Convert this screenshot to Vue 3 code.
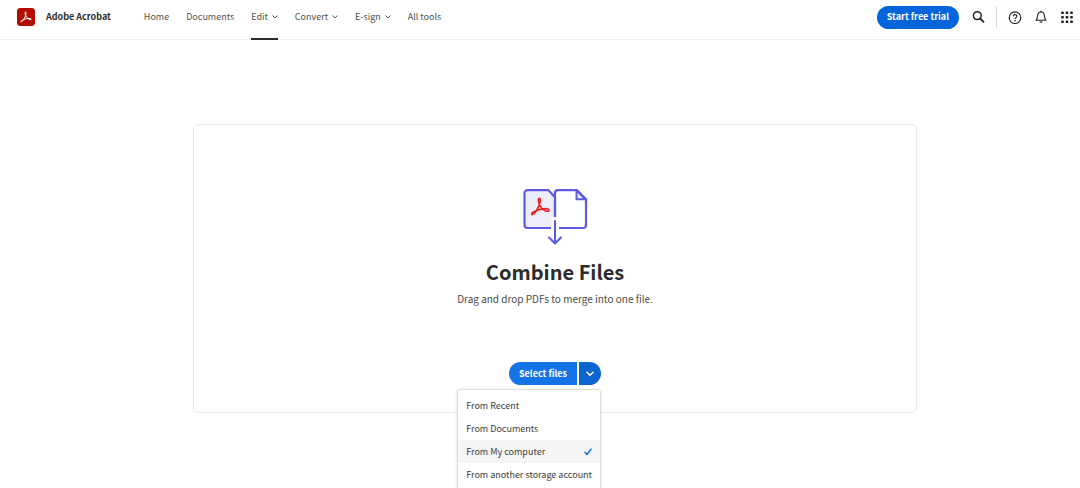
<script setup>
import { ref } from 'vue'

const links = [
  { label: 'Home' },
  { label: 'Documents' },
  { label: 'Edit', menu: true, active: true },
  { label: 'Convert', menu: true },
  { label: 'E-sign', menu: true },
  { label: 'All tools' }
]
const sources = ['From Recent', 'From Documents', 'From My computer', 'From another storage account']
const selected = ref('From My computer')
const open = ref(true)
</script>

<template>
  <div class="page">
    <header class="bar">
      <a class="brand" href="#">
        <svg class="logo" viewBox="0 0 18 18" aria-hidden="true">
          <rect width="18" height="18" rx="3.4" fill="#b30b00" />
          <path d="M8.6 3.9c-1 .1-.5 2.5.3 4 .9 1.8 2.600 3.600 4.700 3.800 1.200.1 1-1.200-.6-1.300-2.500-.2-6 .8-8.200 2-1.500.9-.9 2 .2 1.100C6.500 12.200 8.400 8.700 9 6.200c.3-1.300.2-2.300-.4-2.300z" fill="none" stroke="#fff" stroke-width="1" />
        </svg>
        <span>Adobe Acrobat</span>
      </a>
      <nav class="nav">
        <a v-for="l in links" :key="l.label" href="#" class="link" :class="{ active: l.active }">
          {{ l.label }}
          <svg v-if="l.menu" class="caret" viewBox="0 0 6 4" aria-hidden="true">
            <path d="M.8.8 3 2.900 5.200.8" fill="none" stroke="currentColor" stroke-width="1" stroke-linecap="round" />
          </svg>
        </a>
      </nav>
      <div class="tools">
        <button class="trial" type="button">Start free trial</button>
        <button class="icon search" type="button" aria-label="Search">
          <svg viewBox="0 0 14 14" width="14" height="14">
            <circle cx="6.300" cy="5.600" r="3.900" fill="none" stroke="#222" stroke-width="1.500" />
            <path d="m9.300 8.600 3.200 3.200" stroke="#222" stroke-width="1.800" stroke-linecap="round" />
          </svg>
        </button>
        <span class="rule"></span>
        <button class="icon help" type="button" aria-label="Help">
          <svg viewBox="0 0 14 14" width="14" height="14">
            <circle cx="7" cy="7.700" r="5.800" fill="none" stroke="#222" stroke-width="1.100" />
            <path d="M5.300 6.300c0-2.300 3.500-2.200 3.500 0 0 1.300-1.700 1.300-1.700 2.700" fill="none" stroke="#222" stroke-width="1.100" />
            <circle cx="7.100" cy="10.700" r=".8" fill="#222" />
          </svg>
        </button>
        <button class="icon bell" type="button" aria-label="Notifications">
          <svg viewBox="0 0 14 14" width="14" height="14">
            <path d="M2 10.300c1.500-1.300 1.400-2.700 1.600-4.700C3.800 3.300 5.100 2 7 2s3.200 1.300 3.400 3.600c.2 2 .1 3.400 1.600 4.700z" fill="none" stroke="#222" stroke-width="1.100" stroke-linejoin="round" />
            <path d="M6 1.800c0-1.300 2-1.300 2 0zM5.400 11.400h3.200c-.3 1.800-2.900 1.800-3.200 0z" fill="#222" />
          </svg>
        </button>
        <button class="icon apps" type="button" aria-label="Apps">
          <svg viewBox="0 0 12 12" width="12" height="12" fill="#222">
            <template v-for="r in 3" :key="r">
              <rect v-for="c in 3" :key="c" :x="c * 4.500 - 4.300" :y="r * 4.500 - 4" width="2.600" height="2.600" rx=".6" />
            </template>
          </svg>
        </button>
      </div>
    </header>

    <main class="main">
      <section class="card">
        <svg class="art" viewBox="0 0 66 58" aria-hidden="true">
          <path d="M5.500 2.200h21l6.500 7V40H5.500a3 3 0 0 1-3-3V5.200a3 3 0 0 1 3-3z" fill="#eeeefb" />
          <path d="M29 40H5.500a3 3 0 0 1-3-3V5.200a3 3 0 0 1 3-3h21l6.500 7V29" fill="none" stroke="#5c5ce0" stroke-width="2.200" stroke-linejoin="round" />
          <path d="M33 29V5.200a3 3 0 0 1 3-3H55l9 9V37a3 3 0 0 1-3 3H37" fill="none" stroke="#5c5ce0" stroke-width="2.200" stroke-linejoin="round" />
          <path d="M54.500 2.500v8.800h9z" fill="#eeeefb" stroke="#5c5ce0" stroke-width="2" stroke-linejoin="round" />
          <path d="M29.500 29.500h7V45h-7z" fill="#fff" />
          <path d="M33 33v22M27 49.500l6 6 6-6" fill="none" stroke="#5c5ce0" stroke-width="2.100" stroke-linecap="round" stroke-linejoin="round" />
          <path d="M17.500 10.300c-2 .1-1 4.700.6 7.500 1.800 3.200 4.800 5.400 7.700 5.400 1.900 0 1.600-2.300-1-2.500-4.700-.3-9.700 1.200-13.400 3.300-2.900 1.700-1.700 3.700.4 2 2.300-2 5.500-8 6.300-12.200.4-2.100.2-3.500-.6-3.500z" fill="none" stroke="#ed1c1c" stroke-width="1.600" />
        </svg>
        <h1>Combine Files</h1>
        <p>Drag and drop PDFs to merge into one file.</p>
        <div class="picker">
          <button class="select" type="button">Select files</button>
          <button class="more" type="button" aria-label="Choose a source" :aria-expanded="open" @click="open = !open">
            <svg viewBox="0 0 8 6" width="8" height="6">
              <path d="m1 1.200 3 3 3-3" fill="none" stroke="#fff" stroke-width="1.500" stroke-linecap="round" stroke-linejoin="round" />
            </svg>
          </button>
          <div v-if="open" class="menu" role="menu">
            <button
              v-for="s in sources"
              :key="s"
              class="item"
              :class="{ chosen: s === selected }"
              type="button"
              role="menuitemradio"
              :aria-checked="s === selected"
              @click="selected = s"
            >
              {{ s }}
              <svg v-if="s === selected" viewBox="0 0 8 8" width="8" height="8">
                <path d="m1 4.300 2 2.200L7 1.200" fill="none" stroke="#1473e6" stroke-width="1.500" stroke-linecap="round" stroke-linejoin="round" />
              </svg>
            </button>
          </div>
        </div>
      </section>
    </main>
  </div>
</template>

<style>
body {
  margin: 0;
}
</style>

<style scoped>
.page {
  height: 100vh;
  overflow: hidden;
  background: #fff;
  color: #2c2c2c;
  font-family: "Noto Sans CJK SC", "Noto Sans", sans-serif;
  font-size: 9px;
  line-height: 16px;
}
button {
  margin: 0;
  padding: 0;
  border: 0;
  background: none;
  color: inherit;
  font: inherit;
  cursor: pointer;
}
a {
  color: inherit;
  text-decoration: none;
}
svg {
  display: block;
  flex: none;
}
.bar {
  display: flex;
  box-sizing: border-box;
  height: 40px;
  padding: 0 7px 0 17px;
  border-bottom: 1px solid #eeeeee;
}
.brand {
  display: flex;
  align-items: center;
  gap: 11px;
  height: 34px;
  margin-right: 33px;
  font-weight: 700;
  white-space: nowrap;
}
.logo {
  width: 18px;
  height: 18px;
}
.nav {
  display: flex;
  gap: 17px;
}
.link {
  display: flex;
  align-items: center;
  gap: 4px;
  height: 34px;
  padding-bottom: 4px;
  color: #505050;
  white-space: nowrap;
}
.link.active {
  border-bottom: 2px solid #2c2c2c;
}
.caret {
  width: 6px;
  height: 4px;
}
.tools {
  display: flex;
  align-items: center;
  height: 34px;
  margin-left: auto;
}
.trial {
  height: 23px;
  padding: 0 10px;
  border-radius: 12px;
  background: #0265dc;
  color: #fff;
  font-weight: 700;
}
.search {
  margin-left: 12px;
}
.rule {
  width: 1px;
  height: 22px;
  margin: 0 11px;
  background: #d8d8d8;
}
.bell {
  margin: 0 13px 0 12px;
}
.main {
  padding: 84px 163px 0 193px;
}
.card {
  display: flex;
  flex-direction: column;
  align-items: center;
  padding: 63px 16px 27px;
  border: 1px solid #e8e8e8;
  border-radius: 5px;
}
.art {
  width: 66px;
  height: 58px;
}
h1 {
  margin: 11px 0 0;
  font-size: 20px;
  line-height: 30px;
  font-weight: 700;
}
p {
  margin: 4px 0 0;
  color: #4b4b4b;
  font-size: 10px;
  line-height: 16px;
}
.picker {
  position: relative;
  display: flex;
  gap: 2px;
  margin-top: 55px;
  color: #fff;
}
.select {
  height: 23px;
  padding: 0 10px;
  border-radius: 12px 0 0 12px;
  background: #1473e6;
  font-weight: 700;
}
.more {
  display: flex;
  align-items: center;
  justify-content: center;
  width: 22px;
  height: 23px;
  border-radius: 0 12px 12px 0;
  background: #0d66d0;
}
.menu {
  position: absolute;
  top: 27px;
  right: 0;
  padding: 4px 0;
  border: 1px solid #dcdcdc;
  border-radius: 3px;
  background: #fff;
  box-shadow: 0 1px 3px rgba(0, 0, 0, 0.15);
}
.item {
  display: flex;
  align-items: center;
  justify-content: space-between;
  width: 100%;
  padding: 4px 8px;
  color: #3c3c3c;
  line-height: 15px;
  white-space: nowrap;
}
.item.chosen {
  background: #f5f5f5;
}
</style>
